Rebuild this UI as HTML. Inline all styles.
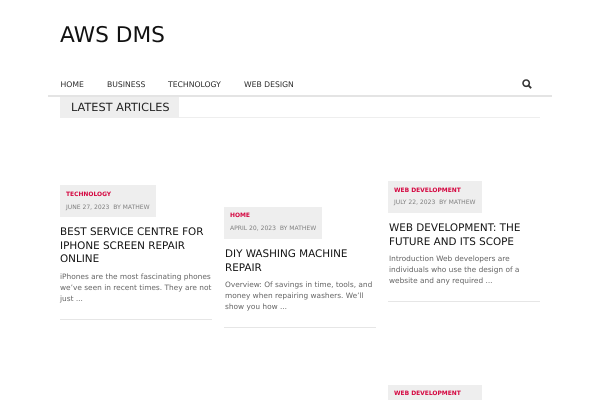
<!DOCTYPE html>
<html lang="en"><head><meta charset="utf-8"><title>AWS DMS</title>
<style>
html,body{margin:0;padding:0;background:#fff;width:600px;height:400px;overflow:hidden}
body{font-family:"DejaVu Sans","Liberation Sans",sans-serif;position:relative;text-rendering:geometricPrecision}
#w{position:absolute;left:0;top:0;width:600px;height:400px;filter:blur(.3px)}
.a{position:absolute;white-space:nowrap}
.nav{top:78.5px;font-size:7.7px;line-height:12px;color:#2a2a2a}
.box{position:absolute;background:#eee}
.cat{font-size:5.95px;line-height:10px;font-weight:bold;color:#d4053f}
.meta{font-size:6.05px;line-height:10px;color:#808080}
.t{font-size:10.4px;line-height:13.5px;color:#111}
.p{font-size:7.4px;line-height:11px;color:#666}
.hr{position:absolute;height:1px;background:#e6e6e6}
</style></head><body><div id="w">
<div class="a" style="left:60px;top:22px;font-size:21.7px;line-height:28px;color:#111">AWS DMS</div>
<div class="a nav" style="left:60.5px">HOME</div>
<div class="a nav" style="left:107px">BUSINESS</div>
<div class="a nav" style="left:168px">TECHNOLOGY</div>
<div class="a nav" style="left:244px">WEB DESIGN</div>
<svg class="a" style="left:522px;top:79px" width="10" height="10" viewBox="0 0 12 12"><circle cx="5" cy="5" r="3.8" fill="none" stroke="#333" stroke-width="1.9"/><path d="M7.7 7.7L11 11" stroke="#333" stroke-width="2.2" fill="none"/></svg>
<div class="hr" style="left:48px;top:95px;width:504px;height:2px;background:#e4e4e4"></div>
<div class="box" style="left:60px;top:97px;width:119px;height:21px"></div>
<div class="hr" style="left:60px;top:117px;width:480px;background:#eee"></div>
<div class="a" style="left:71px;top:100.7px;font-size:11.3px;line-height:14px;color:#222">LATEST ARTICLES</div>

<div class="box" style="left:60px;top:185px;width:96px;height:32px"></div>
<div class="a cat" style="left:66px;top:190px">TECHNOLOGY</div>
<div class="a meta" style="left:66px;top:203px">JUNE 27, 2023 &nbsp;BY MATHEW</div>
<div class="a t" style="left:60px;top:226px">BEST SERVICE CENTRE FOR<br>IPHONE SCREEN REPAIR<br>ONLINE</div>
<div class="a p" style="left:60px;top:271px">iPhones are the most fascinating phones<br>we’ve seen in recent times. They are not<br>just ...</div>
<div class="hr" style="left:60px;top:319px;width:152px"></div>

<div class="box" style="left:224px;top:207px;width:98px;height:32px"></div>
<div class="a cat" style="left:230px;top:211px">HOME</div>
<div class="a meta" style="left:230px;top:224px">APRIL 20, 2023 &nbsp;BY MATHEW</div>
<div class="a t" style="left:225px;top:248px">DIY WASHING MACHINE<br>REPAIR</div>
<div class="a p" style="left:225px;top:279px">Overview: Of savings in time, tools, and<br>money when repairing washers. We’ll<br>show you how ...</div>
<div class="hr" style="left:224px;top:327px;width:152px"></div>

<div class="box" style="left:388px;top:181px;width:94px;height:32px"></div>
<div class="a cat" style="left:394px;top:186px">WEB DEVELOPMENT</div>
<div class="a meta" style="left:394px;top:198px">JULY 22, 2023 &nbsp;BY MATHEW</div>
<div class="a t" style="left:389px;top:222px">WEB DEVELOPMENT: THE<br>FUTURE AND ITS SCOPE</div>
<div class="a p" style="left:389px;top:253px">Introduction Web developers are<br>individuals who use the design of a<br>website and any required ...</div>
<div class="hr" style="left:388px;top:301px;width:152px"></div>

<div class="box" style="left:388px;top:385px;width:94px;height:15px"></div>
<div class="a cat" style="left:394px;top:389px">WEB DEVELOPMENT</div>
</div></body></html>
